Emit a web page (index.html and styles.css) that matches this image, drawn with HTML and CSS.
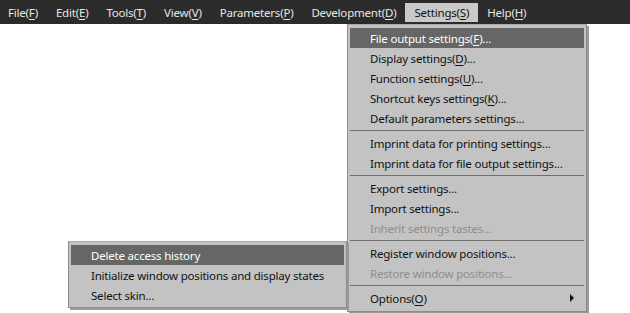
FILE: index.html
```html
<!DOCTYPE html>
<html lang="en">
<head>
  <meta charset="UTF-8">
  <title>Settings menu</title>
  <link rel="stylesheet" href="styles.css">
</head>
<body>
  <div class="menubar">
    <div class="menubar-item">File(<u>F</u>)</div>
    <div class="menubar-item">Edit(<u>E</u>)</div>
    <div class="menubar-item">Tools(<u>T</u>)</div>
    <div class="menubar-item">View(<u>V</u>)</div>
    <div class="menubar-item">Parameters(<u>P</u>)</div>
    <div class="menubar-item">Development(<u>D</u>)</div>
    <div class="menubar-item active">Settings(<u>S</u>)</div>
    <div class="menubar-item">Help(<u>H</u>)</div>
  </div>

  <div class="dropdown settings-menu">
    <div class="menu-item hover">File output settings(<u>F</u>)...</div>
    <div class="menu-item">Display settings(<u>D</u>)...</div>
    <div class="menu-item">Function settings(<u>U</u>)...</div>
    <div class="menu-item">Shortcut keys settings(<u>K</u>)...</div>
    <div class="menu-item">Default parameters settings...</div>
    <div class="separator"></div>
    <div class="menu-item">Imprint data for printing settings...</div>
    <div class="menu-item">Imprint data for file output settings...</div>
    <div class="separator"></div>
    <div class="menu-item">Export settings...</div>
    <div class="menu-item">Import settings...</div>
    <div class="menu-item disabled">Inherit settings tastes...</div>
    <div class="separator"></div>
    <div class="menu-item">Register window positions...</div>
    <div class="menu-item disabled">Restore window positions...</div>
    <div class="separator"></div>
    <div class="menu-item submenu">Options(<u>O</u>)<span class="arrow"></span></div>
  </div>

  <div class="dropdown options-menu">
    <div class="menu-item hover">Delete access history</div>
    <div class="menu-item">Initialize window positions and display states</div>
    <div class="menu-item">Select skin...</div>
  </div>
</body>
</html>
```

FILE: styles.css
```css
body {
  margin: 0;
  background-color: #ffffff;
  font-family: "Noto Sans", "Open Sans", sans-serif;
  font-size: 11.5px;
  letter-spacing: -0.2px;
  color: #000000;
  width: 630px;
  height: 313px;
  overflow: hidden;
}

u {
  text-decoration-thickness: 1px;
  text-underline-offset: 2px;
}

.menubar {
  display: flex;
  height: 24px;
  padding-left: 0;
  margin-left: -1px;
  background-color: #2b2b2b;
  color: #e6e6e6;
}

.menubar-item {
  display: flex;
  align-items: center;
  padding: 0 9px;
  margin: 3px 0 2px;
}

.menubar-item.active {
  background-color: #c9c9c9;
  color: #111111;
}

.dropdown {
  position: absolute;
  background-color: #c3c3c3;
  border: 1px solid #8c8c8c;
  border-top-color: #a8a8a8;
  box-shadow: 2px 2px 0 #9a9a9a;
  padding: 3px 2px;
}

.settings-menu {
  top: 24px;
  left: 347px;
  width: 234px;
}

.options-menu {
  top: 241px;
  left: 68px;
  width: 273px;
  padding: 3px 2px 2px;
}

.menu-item {
  position: relative;
  height: 20px;
  line-height: 21px;
  padding-left: 20px;
  white-space: nowrap;
  color: #111111;
}

.menu-item.hover {
  background-color: #666666;
  color: #ffffff;
}

.menu-item.disabled {
  color: #8e8e8e;
}

.separator {
  height: 1px;
  margin: 2px 0;
  background-color: #6e6e6e;
}

.arrow {
  position: absolute;
  right: 10px;
  top: 6px;
  width: 0;
  height: 0;
  border-top: 4px solid transparent;
  border-bottom: 4px solid transparent;
  border-left: 4px solid #111111;
}
```
